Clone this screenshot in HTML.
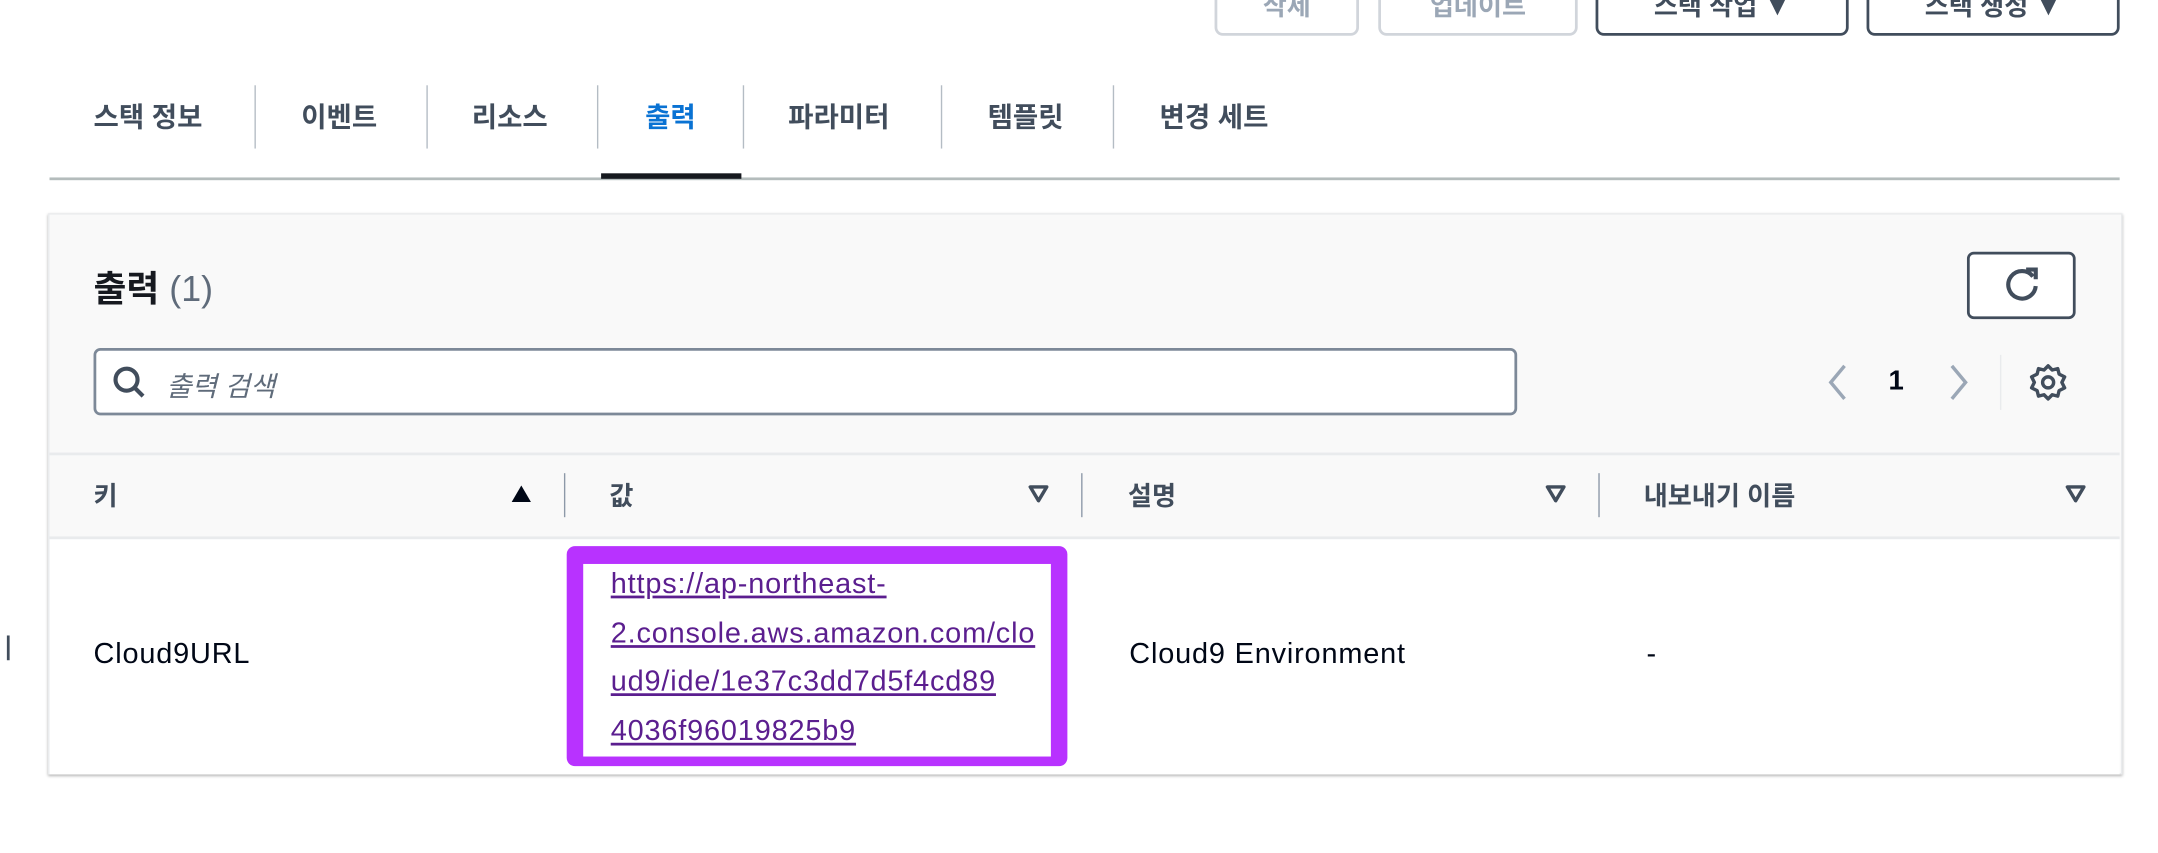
<!DOCTYPE html>
<html><head><meta charset="utf-8"><style>
html,body{margin:0;padding:0;background:#fff;overflow:hidden;width:2158px;height:852px}
#w{position:absolute;left:0;top:0;width:1570px;height:620px;transform:scale(1.3755,1.3755);transform-origin:0 0;font-family:"Liberation Sans","Noto Sans CJK KR",sans-serif;color:#000716}
.a{position:absolute;white-space:nowrap}
.btn{position:absolute;top:-10px;height:36px;border:2px solid #414d5c;border-radius:6px;box-sizing:border-box;font-weight:bold;font-size:19px;color:#414d5c;text-align:center;line-height:28px;background:#fff}
.dis{border-color:#d1d5db;color:#9ba7b6}
.tab{position:absolute;top:69px;font-size:20px;font-weight:bold;color:#414d5c}
.dv{position:absolute;top:62px;height:46px;width:1px;background:#b4bcc4}
.hd{position:absolute;top:346px;font-size:19px;font-weight:bold;color:#414d5c}
.hdv{position:absolute;top:344px;height:32px;width:1px;background:#8d99a8}
.tri{position:absolute;top:352px}
.t{font-size:21px;letter-spacing:0.6px}
</style></head><body><div id="w">
<div class="btn dis" style="left:883px;width:105px">삭제</div>
<div class="btn dis" style="left:1002px;width:145px">업데이트</div>
<div class="btn" style="left:1160px;width:184px">스택 작업 ▼</div>
<div class="btn" style="left:1357px;width:184px">스택 생성 ▼</div>

<div class="tab" style="left:68px">스택 정보</div>
<div class="dv" style="left:185px"></div>
<div class="tab" style="left:219px">이벤트</div>
<div class="dv" style="left:310px"></div>
<div class="tab" style="left:343px">리소스</div>
<div class="dv" style="left:434px"></div>
<div class="tab" style="left:469px;color:#0972d3">출력</div>
<div class="dv" style="left:540px"></div>
<div class="tab" style="left:573px">파라미터</div>
<div class="dv" style="left:684px"></div>
<div class="tab" style="left:718px">템플릿</div>
<div class="dv" style="left:809px"></div>
<div class="tab" style="left:843px">변경 세트</div>
<div class="a" style="left:36px;top:129px;width:1505px;height:2px;background:#b4bcbc"></div>
<div class="a" style="left:437px;top:126px;width:102px;height:4px;background:#16191f"></div>

<div class="a" style="left:35px;top:155px;width:1506px;height:406px;background:#f9f9f9;border:1px solid #e9ebed;box-shadow:0 1px 2px rgba(0,0,0,.3)"></div>
<div class="a" style="left:68px;top:190px;font-size:26px;font-weight:bold;color:#16191f">출력 <span style="font-weight:normal;color:#5f6b7a">(1)</span></div>
<div class="a" style="left:1430px;top:183px;width:79px;height:49px;border:2px solid #414d5c;border-radius:5px;box-sizing:border-box;background:#fff">
<svg width="75" height="45" viewBox="0 0 75 45" style="position:absolute;left:0;top:0"><path d="M46 16 A10 10 0 1 0 48 23" fill="none" stroke="#414d5c" stroke-width="3"/><path d="M41 11 L48 11 L48 18" fill="none" stroke="#414d5c" stroke-width="3"/></svg></div>
<div class="a" style="left:68px;top:253px;width:1035px;height:49px;border:2px solid #7d8998;border-radius:5px;box-sizing:border-box;background:#fff"></div>
<svg class="a" style="left:80px;top:264px" width="28" height="28" viewBox="0 0 28 28"><circle cx="12" cy="12" r="8" fill="none" stroke="#414d5c" stroke-width="3"/><path d="M18 18 L24 24" stroke="#414d5c" stroke-width="3"/></svg>
<div class="a" style="left:121px;top:265px;font-size:20px;font-style:italic;color:#5f6b7a">출력 검색</div>
<svg class="a" style="left:1326px;top:263px" width="20" height="30" viewBox="0 0 20 30"><path d="M15 3 L5 15 L15 27" fill="none" stroke="#9ba7b6" stroke-width="2.5"/></svg>
<div class="a" style="left:1373px;top:266px;font-size:20px;font-weight:bold;color:#000716">1</div>
<svg class="a" style="left:1414px;top:263px" width="20" height="30" viewBox="0 0 20 30"><path d="M5 3 L15 15 L5 27" fill="none" stroke="#9ba7b6" stroke-width="2.5"/></svg>
<div class="a" style="left:1454px;top:258px;width:1px;height:40px;background:#e9ebed"></div>
<svg class="a" style="left:1475px;top:264px" width="28" height="28" viewBox="0 0 28 28"><path d="M14 2 L17 5 L21 4 L22 8 L26 10 L24 14 L26 18 L22 20 L21 24 L17 23 L14 26 L11 23 L7 24 L6 20 L2 18 L4 14 L2 10 L6 8 L7 4 L11 5 Z" fill="none" stroke="#414d5c" stroke-width="2.5" stroke-linejoin="round"/><circle cx="14" cy="14" r="4" fill="none" stroke="#414d5c" stroke-width="2.5"/></svg>

<div class="a" style="left:36px;top:329px;width:1505px;height:2px;background:#e9ebed"></div>
<div class="hd" style="left:68px">키</div>
<svg class="tri" style="left:371px" width="16" height="14" viewBox="0 0 16 14"><path d="M8 1 L15 13 L1 13 Z" fill="#000716"/></svg>
<div class="hdv" style="left:410px"></div>
<div class="hd" style="left:443px">값</div>
<svg class="tri" style="left:747px" width="16" height="14" viewBox="0 0 16 14"><path d="M2 2 L14 2 L8 12 Z" fill="none" stroke="#414d5c" stroke-width="2.5" stroke-linejoin="round"/></svg>
<div class="hdv" style="left:786px"></div>
<div class="hd" style="left:820px">설명</div>
<svg class="tri" style="left:1123px" width="16" height="14" viewBox="0 0 16 14"><path d="M2 2 L14 2 L8 12 Z" fill="none" stroke="#414d5c" stroke-width="2.5" stroke-linejoin="round"/></svg>
<div class="hdv" style="left:1162px"></div>
<div class="hd" style="left:1195px">내보내기 이름</div>
<svg class="tri" style="left:1501px" width="16" height="14" viewBox="0 0 16 14"><path d="M2 2 L14 2 L8 12 Z" fill="none" stroke="#414d5c" stroke-width="2.5" stroke-linejoin="round"/></svg>
<div class="a" style="left:36px;top:390px;width:1505px;height:171px;background:#fff;border-top:2px solid #e9ebed"></div>
<div class="a" style="left:5px;top:462px;width:2px;height:18px;background:#414d5c"></div>
<div class="a t" style="left:68px;top:464px">Cloud9URL</div>
<div class="a" style="left:412px;top:397px;width:364px;height:160px;background:#b832ff;border-radius:6px"></div>
<div class="a" style="left:424px;top:410px;width:340px;height:140px;background:#fff"></div>
<div class="a" style="left:444px;top:407px;font-size:21px;line-height:35.5px;color:#5b1e8f;text-decoration:underline;letter-spacing:0.6px">https://ap-northeast-<br>2.console.aws.amazon.com/clo<br>ud9/ide/1e37c3dd7d5f4cd89<br>4036f96019825b9</div>
<div class="a t" style="left:821px;top:464px">Cloud9 Environment</div>
<div class="a t" style="left:1197px;top:464px">-</div>
</div></body></html>
